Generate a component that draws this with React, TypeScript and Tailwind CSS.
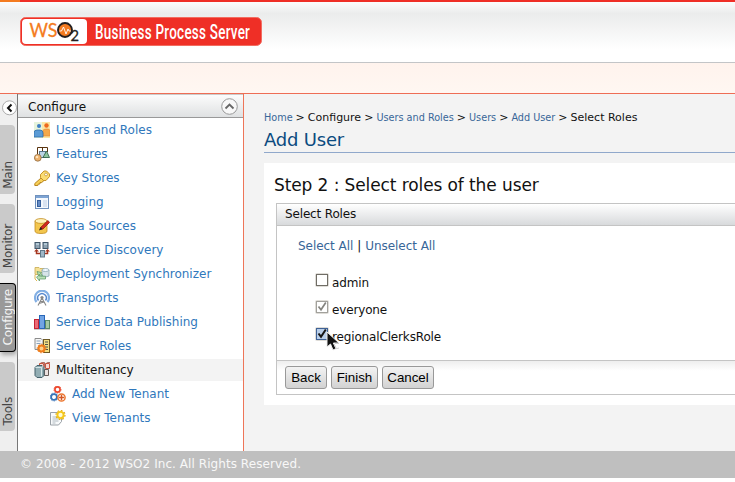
import type { ReactNode } from "react";

const DEJAVU = "font-['DejaVu_Sans',sans-serif]";

function Icon({ children }: { children: ReactNode }) {
  return (
    <svg width="16" height="16" viewBox="0 0 16 16" className="shrink-0">
      {children}
    </svg>
  );
}

const icons: Record<string, ReactNode> = {
  users: (
    <>
      <rect width="9" height="16" fill="#e6f3dc" />
      <rect x="8" width="8" height="16" fill="#fbe6a4" />
      <circle cx="5" cy="4" r="2" fill="#3d7fc4" />
      <circle cx="12.5" cy="3.5" r="2.2" fill="#ee6a1c" />
      <path d="M9 14V9q0-2 3-2h2q2 0 2 3v4z" fill="#f5a84a" stroke="#e98530" strokeWidth=".6" />
      <path d="M0 15v-4q0-3 3-3h3q3 0 3 3v4z" fill="#5b9bd5" stroke="#2f6dab" strokeWidth=".8" />
    </>
  ),
  features: (
    <>
      <path d="M3.500 8V1.500h10V6M8.500 1.500V6" fill="none" stroke="#5a3510" />
      <rect x="5.500" y="5.500" width="6" height="6" fill="#bcd3e4" stroke="#58768c" />
      <path d="M12.500 5l3 6.500H9z" fill="#8cc49c" stroke="#35644d" strokeWidth=".9" />
      <circle cx="3.800" cy="11.800" r="3.400" fill="#eeb26c" stroke="#8d6a40" strokeWidth=".8" />
      <circle cx="3" cy="11" r="1.300" fill="#ffe4bc" />
    </>
  ),
  key: (
    <>
      <path d="M7 8L.8 13.500v2h3l.5-1.500h1.700v-1.500h1.700l2.300-2z" fill="#f8d058" stroke="#b07a14" strokeWidth=".9" />
      <path d="M6.500 4.500L10 1h2.500l3 3v2.500L12 10.500H9.500l-3-3z" fill="#fbdc72" stroke="#c08a1c" strokeWidth=".9" />
      <circle cx="12" cy="4.500" r="1.400" fill="#fff" stroke="#b07a14" strokeWidth=".6" />
    </>
  ),
  logging: (
    <>
      <rect x="1.500" y="1.500" width="13" height="13" fill="#f4f8fd" stroke="#7192bd" />
      <rect x="2" y="2" width="12" height="2" fill="#7da4d4" />
      <rect x="3" y="6" width="4" height="7" fill="#355f9c" />
      <rect x="4" y="7" width="2" height="5" fill="#658cc5" />
      <rect x="9" y="6" width="4" height="7" fill="#d9e3f1" />
    </>
  ),
  data: (
    <>
      <path d="M1 3v10q0 2.500 6 2.500t6-2.500V3z" fill="#f3c64d" stroke="#c28b20" strokeWidth=".8" />
      <ellipse cx="7" cy="3" rx="6" ry="2.400" fill="#fff1b8" stroke="#c28b20" strokeWidth=".8" />
      <path d="M6 11.500l1-2.500 7-6.500 1.500 2L9 11z" fill="#d4281e" stroke="#7c1512" strokeWidth=".7" />
      <path d="M5 12.500l1.500-3.500 2 2z" fill="#27211c" />
    </>
  ),
  discovery: (
    <>
      <rect x="1" y=".5" width="5" height="6" fill="#8fa3b2" stroke="#40576a" />
      <rect x="9" y=".5" width="5" height="6" fill="#8fa3b2" stroke="#40576a" />
      <path d="M2 2h3M10 2h3" stroke="#d7edf7" />
      <path d="M2.500 9v2.500h4M13.500 9v2.500H10" fill="none" stroke="#a5351f" strokeWidth="1.500" />
      <path d="M0 9.500L2.500 7 5 9.500zM11 9.500L13.500 7 16 9.500z" fill="#a5351f" />
      <rect x="6.500" y="8.500" width="4" height="6.500" fill="#9fb7c7" stroke="#607889" />
    </>
  ),
  deploy: (
    <>
      <path d="M1 1.500h4l1 1h4v6H1z" fill="#f5e194" stroke="#c8a950" strokeWidth=".8" />
      <path d="M8 4v6q3.500 2 7 0V4z" fill="#d7e4e9" stroke="#8ba7b3" strokeWidth=".8" />
      <ellipse cx="11.500" cy="4" rx="3.500" ry="1.500" fill="#f4fbff" stroke="#8ba7b3" strokeWidth=".8" />
      <path d="M3 5.500l4.500 1-1 1 2 1.500-1 1-2-1.500-1 1zM2.500 11l3-2v1.200h6V13h-6v2z" fill="#b9e1b5" stroke="#559463" strokeWidth=".7" />
      <path d="M1 9v4l2 2" fill="none" stroke="#dfb850" />
    </>
  ),
  transports: (
    <>
      <path d="M2.500 12A7 7 0 1 1 13.500 12" fill="none" stroke="#82afe4" strokeWidth="2.200" />
      <path d="M4.500 10.500A4.300 4.300 0 1 1 11.500 10.500" fill="none" stroke="#5688ce" strokeWidth="1.500" />
      <circle cx="8" cy="7.500" r="1.600" fill="#868686" />
      <path d="M8 8l-4 7.500M8 8l4 7.500M6 11.500h4M5 13.500l5-1.500" stroke="#888" strokeWidth="1.100" />
    </>
  ),
  publishing: (
    <>
      <rect x=".5" y="5.500" width="4" height="9" fill="#ec6b77" stroke="#c32536" />
      <rect x="5.500" y="1.500" width="5" height="13" fill="#71a4e4" stroke="#2866b8" />
      <rect x="11.500" y="6.500" width="4" height="8" fill="#a3c8a5" stroke="#5a8967" />
      <path d="M0 15.500h16" stroke="#ccc" />
    </>
  ),
  roles: (
    <>
      <path d="M1 .5h6l2 2v9H1z" fill="#f6f6f6" stroke="#8b8b8b" />
      <path d="M2.500 3h4M2.500 5.500h4" stroke="#8aa3bb" />
      <rect x="9.500" y="1.500" width="6" height="13" fill="#f4df82" stroke="#6e5a27" />
      <path d="M11 4h3M11 6.500h3M11 9h3M11 11.500h3" stroke="#4e534a" />
      <circle cx="7.500" cy="10.500" r="3" fill="#ffd08a" stroke="#ef7d1b" strokeWidth="2" />
      <circle cx="7.500" cy="10.500" r="4.300" fill="none" stroke="#ef7d1b" strokeDasharray="1.600 1.600" />
    </>
  ),
  tenancy: (
    <>
      <path d="M5.500 1.500h4v5h-4zM11.500 1.500h4v5h-4z" fill="#f8d8d2" stroke="#c6543f" />
      <path d="M6.500 1l1-.5h3v5M12.500 1l1-.5H16" stroke="#8c3326" strokeWidth=".7" fill="none" />
      <path d="M10.500 7.500h4v6h-4z" fill="#ece1df" stroke="#665a56" />
      <path d="M1 5.500l2-2h5l2 2v8l-2 2H3l-2-2z" fill="#92adb3" stroke="#45616b" />
      <path d="M1.500 5.500h6v9M7.500 5.500l2-1.500" fill="none" stroke="#dcebed" strokeWidth=".9" />
    </>
  ),
  addTenant: (
    <>
      <circle cx="7.500" cy="3.500" r="2.600" fill="#fff" stroke="#ed4a30" strokeWidth="1.700" />
      <circle cx="7.500" cy="3.500" r="3.600" fill="none" stroke="#ed4a30" strokeDasharray="1.200 1.200" strokeWidth=".8" />
      <circle cx="4" cy="11" r="2.900" fill="#fff" stroke="#3773b7" strokeWidth="1.800" />
      <circle cx="4" cy="11" r="4" fill="none" stroke="#3773b7" strokeDasharray="1.300 1.300" strokeWidth=".8" />
      <circle cx="11.500" cy="11.500" r="3.600" fill="#fff" stroke="#ec762f" strokeWidth="1.500" />
      <path d="M11.500 9v5M9 11.500h5" stroke="#d55825" strokeWidth="1.500" />
    </>
  ),
  viewTenant: (
    <>
      <path d="M.5 2.500h11v9l-3 3.500h-8z" fill="#f8fafb" stroke="#9aa1a7" />
      <path d="M2.500 7h5M2.500 9h6M2.500 11h6M2.500 13h3" stroke="#b0bac1" />
      <circle cx="10.500" cy="5" r="3.100" fill="#fffbd4" stroke="#f6c818" strokeWidth="1.900" />
      <circle cx="10.500" cy="5" r="4.500" fill="none" stroke="#e3ae12" strokeDasharray="1.700 1.800" strokeWidth="1.200" />
    </>
  ),
};

const menu = [
  { label: "Users and Roles", icon: "users" },
  { label: "Features", icon: "features" },
  { label: "Key Stores", icon: "key" },
  { label: "Logging", icon: "logging" },
  { label: "Data Sources", icon: "data" },
  { label: "Service Discovery", icon: "discovery" },
  { label: "Deployment Synchronizer", icon: "deploy" },
  { label: "Transports", icon: "transports" },
  { label: "Service Data Publishing", icon: "publishing" },
  { label: "Server Roles", icon: "roles" },
  { label: "Multitenancy", icon: "tenancy", heading: true },
  { label: "Add New Tenant", icon: "addTenant", nested: true },
  { label: "View Tenants", icon: "viewTenant", nested: true },
];

function Logo() {
  return (
    <svg width="242" height="29" viewBox="0 0 242 29" className="block">
      <rect x=".5" y=".5" width="241" height="28" rx="5" fill="#ef2f26" stroke="#f26c60" />
      <rect x="2" y="2" width="65" height="25" rx="4" fill="#fff" />
      <text x="9.500" y="20" fill="#f47b20" stroke="#f47b20" strokeWidth=".3" fontFamily="Lato, sans-serif" fontSize="19" textLength="28" lengthAdjust="spacingAndGlyphs">WS</text>
      <circle cx="45" cy="13" r="7" fill="#f47b20" stroke="#231f20" strokeWidth="1.900" />
      <path d="M39.500 14h2l2-4 2.500 7 2-5 1 2h2" fill="none" stroke="#fff" strokeWidth=".9" />
      <text x="50.500" y="24" fill="#231f20" stroke="#231f20" strokeWidth=".3" fontFamily="Lato, sans-serif" fontSize="16" textLength="8.500" lengthAdjust="spacingAndGlyphs">2</text>
      <g transform="translate(75 22) scale(.64 1)">
        <text fill="#fff" fontFamily="Roboto, sans-serif" fontWeight="500" fontSize="21" textLength="242" lengthAdjust="spacing">Business Process Server</text>
      </g>
    </svg>
  );
}

function SideTab({ label, active }: { label: string; active?: boolean }) {
  return (
    <div
      className={
        active
          ? "flex h-[69px] w-[16px] items-center justify-center rounded-r-[4px] border border-l-0 border-black bg-[#999] pl-[2px] text-[#f4f4f4] shadow-[1px_3px_4px_#aaa]"
          : "flex h-[69px] w-[15px] items-end justify-center rounded-r-[4px] bg-[#cacaca] pb-[5px] pl-[2px] text-[#444]"
      }
    >
      <span className="rotate-180 text-[12px] leading-[15px] tracking-[-0.2px] [writing-mode:vertical-rl]">{label}</span>
    </div>
  );
}

function RoleCheckbox({ label, state }: { label: string; state: "off" | "disabled" | "on" }) {
  const stroke = state === "on" ? "#3f6296" : state === "disabled" ? "#a2a19c" : "#706d66";
  const fill = state === "on" ? "#b9cfea" : "#fff";
  return (
    <div className="relative flex h-[27px] items-center">
      <svg width="14" height="14" viewBox="0 0 14 14" className="mb-[4px] shrink-0">
        <rect x=".5" y=".5" width="13" height="13" rx="1" fill="none" stroke="#dedcd7" />
        <rect x="1.500" y="1.500" width="11" height="11" fill={fill} stroke={stroke} />
        {state !== "off" && (
          <path d="M3.500 6.500l2.500 3.200L10.800 2.500" fill="none" stroke={state === "on" ? "#151515" : "#85847f"} strokeWidth={state === "on" ? 2 : 1.700} />
        )}
      </svg>
      <span className="ml-[3px] mt-[2px] text-[12px] leading-[16px] tracking-[-0.15px]">{label}</span>
      {state === "on" && (
        <svg width="14" height="20" viewBox="0 0 14 20" className="absolute left-[11px] top-[9px]">
          <path d="M1 1v15l3.500-3 2.500 6 3-1.300-2.600-5.700H13z" fill="#111" stroke="#eee" />
          <path d="M8 13l2.500 4.700L13 17M9 12.500h4" fill="none" stroke="#bbb" strokeWidth=".7" />
        </svg>
      )}
    </div>
  );
}

function Button({ label, size }: { label: string; size: string }) {
  return (
    <button
      className={`${size} h-[23px] rounded-[3px] border border-[#999] bg-linear-to-b from-[#f3f3f3] to-[#d2d2d2] font-['Liberation_Sans',sans-serif] text-[13.33px] leading-[20px] text-black`}
    >
      {label}
    </button>
  );
}

function Crumb({ children }: { children: ReactNode }) {
  return <a className="text-[9.7px] text-[#386698]">{children}</a>;
}

export default function App() {
  return (
    <div className={`${DEJAVU} h-[482px] w-[735px] overflow-hidden bg-white text-[12px] text-[#111]`}>
      <header className="flex h-[62px] flex-col bg-linear-to-b from-[#fff] via-[#ebecec] via-22% to-white to-80%">
        <div className="flex h-[2px]">
          <div className="w-[20px] bg-[#f47b20]" />
          <div className="flex-1 bg-[#ef2f26]" />
        </div>
        <div className="pl-[20px] pt-[15px]">
          <Logo />
        </div>
      </header>
      <div className="h-[32px] border-b border-t border-b-[#ee6d55] border-t-[#c3c5c7] bg-linear-to-b from-[#fff3ed] to-[#fff7f2]" />

      <div className="flex h-[357px] bg-[#f3f3f3]">
        <nav className="flex w-[18px] shrink-0 flex-col border-r border-[#777] bg-[#efefef] pt-[6px]">
          <svg width="15" height="16" viewBox="0 0 15 16" className="ml-[2px] shrink-0">
            <circle cx="7.500" cy="7.800" r="7" fill="#fff" stroke="#aaa" />
            <path d="M9.500 4.500L6 8l3.500 3.500" fill="none" stroke="#111" strokeWidth="2" />
          </svg>
          <div className="mt-[9px] flex flex-col gap-[10px]">
            <SideTab label="Main" />
            <SideTab label="Monitor" />
            <SideTab label="Configure" active />
            <SideTab label="Tools" />
          </div>
        </nav>

        <aside className="w-[226px] shrink-0 border-r border-[#ee7558] bg-white">
          <div className="flex h-[24px] items-center justify-between border-b border-t border-b-[#999] border-t-[#ccc] bg-linear-to-b from-[#fcfcfc] to-[#dfe1e2] pl-[10px] pr-[5px]">
            <span className="pt-[1px]">Configure</span>
            <svg width="17" height="17" viewBox="0 0 17 17">
              <circle cx="8.500" cy="8.500" r="7.800" fill="#f8f8f8" stroke="#999" />
              <path d="M4.500 10.500l4-4 4 4" fill="none" stroke="#666" strokeWidth="1.800" />
            </svg>
          </div>
          <ul className="flex flex-col gap-[2px] pt-[1px]">
            {menu.map((m) => (
              <li
                key={m.label}
                className={`flex h-[22px] items-center gap-[6px] ${m.nested ? "pl-[32px]" : "pl-[16px]"} ${m.heading ? "bg-[#f3f3f3] text-[#111]" : "text-[#3078bc]"}`}
              >
                <Icon>{icons[m.icon]}</Icon>
                <span className="leading-[16px]">{m.label}</span>
              </li>
            ))}
          </ul>
        </aside>

        <main className="min-w-0 flex-1 pl-[20px] pt-[16px]">
          <div className="flex h-[16px] items-center gap-[3px] whitespace-nowrap text-[11px]">
            <Crumb>Home</Crumb>
            <span>&gt;</span>
            <span>Configure</span>
            <span>&gt;</span>
            <Crumb>Users and Roles</Crumb>
            <span>&gt;</span>
            <Crumb>Users</Crumb>
            <span>&gt;</span>
            <Crumb>Add User</Crumb>
            <span>&gt;</span>
            <span>Select Roles</span>
          </div>
          <h2 className="h-[27px] border-b border-[#90a8cb] pt-[3px] text-[18px] leading-[21px] tracking-[-0.2px] text-[#0b4b80]">Add User</h2>
          <section className="mt-[10px] h-[242px] bg-white pl-[10px] pt-[11px]">
            <h3 className="h-[29px] text-[17px] leading-[22px] tracking-[-0.1px]">Step 2 : Select roles of the user</h3>
            <div className="ml-[2px] h-[192px] border border-r-0 border-[#c4c4c4]">
              <div className="h-[22px] border-b border-[#c4c4c4] bg-linear-to-b from-white to-[#d8dadc] pl-[8px] text-[12px] leading-[21px] tracking-[-0.15px]">
                Select Roles
              </div>
              <div className="h-[135px] border-b border-[#c4c4c4] pl-[21px] pt-[12px]">
                <div className="flex h-[16px] items-center gap-[4px] text-[12px] tracking-[-0.05px] text-[#386698]">
                  <a>Select All</a>
                  <span className="text-[#111]">|</span>
                  <a>Unselect All</a>
                </div>
                <div className="pl-[17px] pt-[14px]">
                  <RoleCheckbox label="admin" state="off" />
                  <RoleCheckbox label="everyone" state="disabled" />
                  <RoleCheckbox label="regionalClerksRole" state="on" />
                </div>
              </div>
              <div className="flex h-[33px] gap-[4px] bg-linear-to-b from-[#eee] to-white to-30% pl-[8px] pt-[5px]">
                <Button label="Back" size="w-[42px]" />
                <Button label="Finish" size="w-[47px]" />
                <Button label="Cancel" size="w-[52px]" />
              </div>
            </div>
          </section>
        </main>
      </div>
      <footer className="h-[27px] bg-[#bfbfbf] pl-[20px] text-[12px] leading-[26px] tracking-[0.06px] text-[#f8f8f8]">
        © 2008 - 2012 WSO2 Inc. All Rights Reserved.
      </footer>
    </div>
  );
}
